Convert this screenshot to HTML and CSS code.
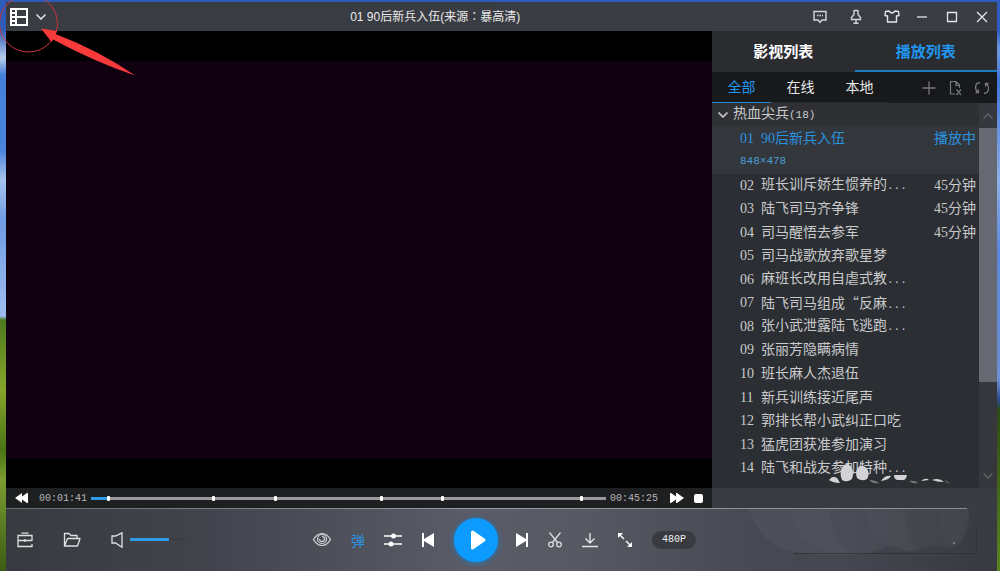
FILE: index.html
```
<!DOCTYPE html>
<html lang="zh-CN">
<head>
<meta charset="utf-8">
<title>01 90后新兵入伍</title>
<link rel="stylesheet" href="styles.css">
</head>
<body>
<main class="window">
  <header class="titlebar">
    <button class="menu" aria-label="主菜单">
      <svg width="18" height="18" viewBox="0 0 18 18" fill="none" stroke="#fff" stroke-width="2"><path d="M1 1H17V17H1ZM6 1V17M6 9H17M1 5H6M1 9H6M1 13H6"/></svg>
      <svg width="10" height="6" viewBox="0 0 10 6" fill="none" stroke="#e4e5e7" stroke-width="1.5"><path d="M.5.5 5 5 9.5.5"/></svg>
    </button>
    <h1 class="title">01 90后新兵入伍(来源<span class="colon" lang="zh-TW">：</span>暴高清)</h1>
    <div class="title-actions">
      <div class="tools">
        <button aria-label="反馈"><svg width="18" height="16" viewBox="0 0 18 16" fill="none" stroke="#d4d5d7" stroke-width="1.4"><path d="M3 2.500H15V11H11L9 13.500 7 11H3Z"/><path d="M6 6.500H12" stroke-dasharray="1.500 1"/></svg></button>
        <button aria-label="置顶"><svg width="18" height="16" viewBox="0 0 18 16" fill="none" stroke="#d4d5d7" stroke-width="1.4"><path d="M6.500 1.500H11.500M7 1.500V5.500L4.500 8.500V10.500H13.500V8.500L11 5.500V1.500M9 10.500V14M6.500 14.200H11.500"/></svg></button>
        <button aria-label="皮肤"><svg width="18" height="16" viewBox="0 0 18 16" fill="none" stroke="#e4e5e7" stroke-width="1.4" stroke-linejoin="round"><path d="M6 2Q9 6 12 2L15.500 2.500 16 6.500 13.500 7V13H4.500V7L2 6.500 2.500 2.500Z"/></svg></button>
      </div>
      <div class="frame">
        <button aria-label="最小化"><svg width="12" height="12" viewBox="0 0 12 12" stroke="#e4e5e7" stroke-width="1.300"><path d="M1 6H11"/></svg></button>
        <button aria-label="最大化"><svg width="12" height="12" viewBox="0 0 12 12" fill="none" stroke="#e4e5e7" stroke-width="1.300"><path d="M1.500 1.500H10.500V10.500H1.500Z"/></svg></button>
        <button aria-label="关闭"><svg width="12" height="12" viewBox="0 0 12 12" stroke="#e4e5e7" stroke-width="1.300"><path d="M1 1 11 11M11 1 1 11"/></svg></button>
      </div>
    </div>
  </header>

  <div class="content">
    <section class="player">
      <div class="video"><div class="picture"></div></div>
      <div class="progress">
        <button aria-label="快退"><svg width="14" height="10" viewBox="0 0 14 10" fill="#fff"><path d="M7 0V3.500L12 0H13V10H12L7 6.500V10L0 5Z"/></svg></button>
        <time class="elapsed">00:01:41</time>
        <div class="seek">
          <input class="range" type="range" min="0" max="2725" value="101" aria-label="播放进度" style="--fill:3.3%">
          <i class="mark" style="left:3.3%"></i>
          <i class="mark" style="left:23.6%"></i>
          <i class="mark" style="left:35.8%"></i>
          <i class="mark" style="left:56.3%"></i>
          <i class="mark" style="left:68.1%"></i>
          <i class="mark" style="left:95.2%"></i>
        </div>
        <time>00:45:25</time>
        <button class="forward" aria-label="快进"><svg width="14" height="10" viewBox="0 0 14 10" fill="#fff"><path d="M0 0H1L6 3.500V0H7L14 5 7 10H6V6.500L1 10H0Z"/></svg></button>
        <button aria-label="停止"><svg width="9" height="9" viewBox="0 0 9 9"><rect width="9" height="9" rx="2" fill="#fff"/></svg></button>
      </div>
    </section>

    <aside class="sidebar">
      <nav class="tabs">
        <button>影视列表</button>
        <button class="current">播放列表</button>
      </nav>
      <div class="filters">
        <button class="current">全部</button>
        <button>在线</button>
        <button>本地</button>
        <div class="list-tools">
          <button aria-label="添加"><svg width="14" height="14" viewBox="0 0 14 14" stroke="#77797c" stroke-width="1.300"><path d="M7 .5V13.500M.5 7H13.500"/></svg></button>
          <button aria-label="清空"><svg width="14" height="16" viewBox="0 0 14 16" fill="none" stroke="#77797c" stroke-width="1.200"><path d="M7 14H2.500V1.500H8L11.500 5V8M8 1.500V5.500H11.500M8.500 9.500 13 15M13 9.500 8.500 15"/></svg></button>
          <button aria-label="循环"><svg width="16" height="14" viewBox="0 0 16 14" fill="none" stroke="#77797c" stroke-width="1.300"><path d="M6 1.500C1 2 0 8 4 11.500M1.500 11.500H4.500V8.500M10 12.500C15 12 16 6 12 2.500M14.500 2.500H11.500V5.500"/></svg></button>
        </div>
      </div>
      <div class="list-area">
        <div class="playlist">
          <button class="group">
            <svg width="10" height="6" viewBox="0 0 10 6" fill="none" stroke="#b9babd" stroke-width="1.800"><path d="M.5.5 5 5 9.500.5"/></svg>
            <span>热血尖兵<span class="mono">(18)</span></span>
          </button>
          <div class="playing">
            <div class="line"><span class="no">01</span><span class="name">90后新兵入伍</span><span>播放中</span></div>
            <div class="size">848×478</div>
          </div>
          <ol class="episodes">
            <li><span class="no">02</span><span class="name">班长训斥娇生惯养的<span class="mono">...</span></span><span>45分钟</span></li>
            <li><span class="no">03</span><span class="name">陆飞司马齐争锋</span><span>45分钟</span></li>
            <li><span class="no">04</span><span class="name">司马醒悟去参军</span><span>45分钟</span></li>
            <li><span class="no">05</span><span class="name">司马战歌放弃歌星梦</span></li>
            <li><span class="no">06</span><span class="name">麻班长改用自虐式教<span class="mono">...</span></span></li>
            <li><span class="no">07</span><span class="name">陆飞司马组成<span class="quote">“</span>反麻<span class="mono">...</span></span></li>
            <li><span class="no">08</span><span class="name">张小武泄露陆飞逃跑<span class="mono">...</span></span></li>
            <li><span class="no">09</span><span class="name">张丽芳隐瞒病情</span></li>
            <li><span class="no">10</span><span class="name">班长麻人杰退伍</span></li>
            <li><span class="no">11</span><span class="name">新兵训练接近尾声</span></li>
            <li><span class="no">12</span><span class="name">郭排长帮小武纠正口吃</span></li>
            <li><span class="no">13</span><span class="name">猛虎团获准参加演习</span></li>
            <li><span class="no">14</span><span class="name">陆飞和战友参加特种<span class="mono">...</span></span></li>
          </ol>
          <svg class="petals" width="126" height="22" viewBox="0 0 126 22" fill="#d3d3d5">
            <path d="M2 17Q8 9 13 20Q6 20 2 17Z"/>
            <path d="M15 17C11 8 16 1 20 1S28 8 25 16Q20 20 15 17Z"/>
            <path d="M30 15C27 7 32 2 36 3S44 10 40 16Q35 19 30 15Z"/>
            <path d="M54 18Q58 12 64 13Q62 17 54 18ZM67 12H80Q79 18 75 17H70Q67 16 67 12Z"/>
            <path d="M94 18Q99 14 102 17ZM105 17Q112 14 117 19Q110 19 105 17Z"/>
            <path fill="#777a7e" d="M42 17Q48 17 52 20Q46 21 42 17ZM82 18Q88 17 91 20Q86 21 82 18ZM118 17L124 21 119 19Z"/>
          </svg>
        </div>
        <div class="scrollbar">
          <svg class="arrow" width="10" height="6" viewBox="0 0 10 6" fill="none" stroke="#5e6065" stroke-width="1.500"><path d="M.5 5.500 5 1 9.500 5.500"/></svg>
          <div class="thumb"></div>
          <svg class="arrow last" width="10" height="6" viewBox="0 0 10 6" fill="none" stroke="#5e6065" stroke-width="1.500"><path d="M.5.5 5 5 9.500.5"/></svg>
        </div>
      </div>
    </aside>
  </div>

  <footer class="controls">
    <svg class="skin" width="236" height="50" viewBox="0 0 236 50">
      <path fill="none" stroke="#2f3238" d="M53 44.500H235.500V16"/>
      <path fill="#fff" fill-opacity=".035" d="M8 0H228C230 20 222 38 210 39Q190 34 170 43L150 36Q120 52 60 44Q20 40 8 0Z"/>
      <path fill="#fff" fill-opacity=".02" d="M48 0H228C228 18 220 36 208 36Q196 22 201 0H165Q162 25 176 40Q135 48 124 0H88Q90 30 110 44Q60 48 48 0Z"/>
      <circle cx="213" cy="34" r="1" fill="#8f9197"/>
    </svg>
    <div class="left">
      <button aria-label="工具箱"><svg width="16" height="16" viewBox="0 0 16 16" fill="none" stroke="#e0e1e3" stroke-width="1.300"><path d="M15 9V3.500H1V14.500H15V12M4.500 1.200H11.500M1 8.500H15M8 7V10"/></svg></button>
      <button aria-label="打开文件"><svg width="18" height="16" viewBox="0 0 18 16" fill="none" stroke="#e0e1e3" stroke-width="1.300" stroke-linejoin="round"><path d="M1.500 14V1.500H6L8 3.500H14V6M1.500 14 4.500 6.500H17L14.500 14Z"/></svg></button>
      <div class="volume">
        <button aria-label="静音"><svg width="12" height="16" viewBox="0 0 12 16" fill="none" stroke="#e0e1e3" stroke-width="1.300"><path d="M1 4H4.500L11 .8V15.200L4.500 11H1Z"/></svg></button>
        <input class="range" type="range" min="0" max="100" value="70" aria-label="音量" style="--fill:70%">
      </div>
    </div>
    <div class="center">
      <button aria-label="护眼"><svg width="20" height="16" viewBox="0 0 20 16" fill="none" stroke="#d6d7da" stroke-width="1.200"><path d="M1.500 7.500Q5 1.500 10 1.500T18.500 7.500Q15 13.500 10 13.500T1.500 7.500Z"/><circle cx="10" cy="7" r="4.500"/><path d="M10 4.500A2.500 2.500 0 1 1 7.500 7"/></svg></button>
      <button class="danmu">弹</button>
      <button aria-label="设置"><svg width="18" height="16" viewBox="0 0 18 16" fill="#fff"><path d="M0 4H18M0 12H18" stroke="#fff" stroke-width="1.300"/><circle cx="9.500" cy="4" r="2.500"/><circle cx="7" cy="12" r="2.500"/></svg></button>
      <button aria-label="上一个"><svg width="16" height="16" viewBox="0 0 16 16" fill="#fff"><path d="M2 1H4V7L14 1V15L4 9V15H2Z"/></svg></button>
      <button class="play" aria-label="播放"><svg width="16" height="20" viewBox="0 0 16 20"><path d="M2.500 2V18L14 10Z" fill="#fff" stroke="#fff" stroke-width="3" stroke-linejoin="round"/></svg></button>
      <button aria-label="下一个"><svg width="14" height="16" viewBox="0 0 14 16" fill="#fff"><path d="M0 1 10 7V1H12V15H10V9L0 15Z"/></svg></button>
      <button aria-label="截取"><svg width="16" height="16" viewBox="0 0 16 16" fill="none" stroke="#dcdde0" stroke-width="1.300"><path d="M1.500.5 9.500 10.500M12.500.5 4.500 10.500"/><circle cx="3" cy="12.500" r="2.300"/><circle cx="11" cy="12.500" r="2.300"/></svg></button>
      <button aria-label="下载"><svg width="18" height="16" viewBox="0 0 18 16" fill="none" stroke="#e4e5e7" stroke-width="1.400"><path d="M8 1V10.500M3.500 6.500 8 11 12.500 6.500M0 14.500H16"/></svg></button>
      <button aria-label="全屏"><svg width="16" height="16" viewBox="0 0 16 16" fill="#fff"><path d="M0 1H5L0 6ZM14 15H9L14 10Z"/><path d="M2 3 6 7M8 9 12 13" stroke="#fff" stroke-width="1.400"/></svg></button>
      <button class="quality">480P</button>
    </div>
  </footer>
</main>
<svg class="callout" width="140" height="80" viewBox="0 0 140 80">
  <ellipse cx="28.500" cy="23.500" rx="29" ry="28.500" fill="none" stroke="#c9343c" stroke-width="1"/>
  <path d="M41 28.500 57 31 55.500 34 Q100 51 135 75.500 Q95 62 53 39.500L51.500 42Z" fill="#f93a3a"/>
</svg>
</body>
</html>
```
FILE: styles.css
```
* { box-sizing: border-box; }

body {
  margin: 0;
  height: 100vh;
  padding: 2px 3px 0 6px;
  overflow: hidden;
  font-family: "Liberation Sans", "Noto Sans CJK SC", sans-serif;
  font-size: 14px;
  color: #c9cacc;
  background:
    linear-gradient(#2f5cc0 0 30px, #6f9ae0 50px, #3f74d8 80px, #8fb0e6 180px, #5a88dc 250px, #6c8fd0 380px, #2a4a90 400px, #2d4a14 410px, #5c8420) right / 50% 100% no-repeat,
    linear-gradient(#2d5cb8 0 30px, #b8cdec 58px, #4580dc 75px, #4a84dc 150px, #a8c4ee 180px, #6f9ce4 220px, #9fbdf0 316px, #4c7a1c 320px, #86a42a 390px, #4a7416 450px, #7a9c30 480px, #3c5c14) left / 50% 100% no-repeat;
}

button {
  display: flex;
  align-items: center;
  justify-content: center;
  padding: 0;
  border: 0;
  background: none;
  color: inherit;
  font: inherit;
}

svg { display: block; flex: none; }

.window {
  display: flex;
  flex-direction: column;
  height: 100%;
  background: #383b41;
}

/* Title bar */
.titlebar {
  display: grid;
  grid-template-columns: 8fr auto 11fr;
  align-items: center;
  height: 29px;
  padding: 0 9px 0 4px;
  background: #393c42;
}
.menu { gap: 8px; justify-self: start; }
.title {
  margin: 0;
  font-size: 12px;
  font-weight: 400;
  line-height: 18px;
  color: #e8e9ea;
}
.colon { font-family: "Noto Sans CJK TC", sans-serif; }
.title-actions { display: flex; justify-content: flex-end; gap: 15px; }
.tools, .frame { display: flex; align-items: center; gap: 18px; }

/* Video and sidebar */
.content {
  display: flex;
  flex: 1;
  min-height: 0;
}
.player {
  display: flex;
  flex: 1;
  flex-direction: column;
  min-width: 0;
}
.video {
  display: flex;
  flex: 1;
  padding: 30px 0;
  background: #000;
}
.picture { flex: 1; background: #110010; }

.progress {
  display: flex;
  align-items: center;
  height: 20px;
  padding: 0 9px;
  background: #1e1f20;
  font-family: "Liberation Mono", monospace;
  font-size: 10px;
  color: #b4b5b7;
}
.elapsed { margin-left: 10px; }
.seek {
  position: relative;
  display: flex;
  flex: 1;
  margin: 0 4px;
}
.forward { margin: 0 10px 0 12px; }

.range {
  --rest: #99999c;
  flex: 1;
  width: 100%;
  min-width: 0;
  height: 3px;
  margin: 0;
  appearance: none;
  background: linear-gradient(90deg, #2e9be8 var(--fill), var(--rest) var(--fill));
}
.range::-webkit-slider-thumb { appearance: none; width: 1px; height: 3px; }
.mark {
  position: absolute;
  top: -1px;
  width: 3px;
  height: 5px;
  margin-left: -1px;
  border-radius: 1px;
  background: #fff;
}

.sidebar {
  display: flex;
  flex: 0 0 285px;
  flex-direction: column;
  padding-bottom: 20px;
  background: #393b42;
}
.tabs {
  display: grid;
  grid-template-columns: 1fr 1fr;
  height: 41px;
  background: #2a2c30;
  font-size: 15px;
  font-weight: 700;
  color: #fff;
}
.tabs button { border-bottom: 2px solid transparent; }
.tabs .current { border-color: #1b7cc2; color: #2196ee; }

.filters {
  display: flex;
  height: 31px;
  background: #18191a;
  color: #e6e7e8;
}
.filters > button {
  width: 59px;
  padding-bottom: 3px;
  border-bottom: 1px solid #292a2c;
}
.filters > .current { border-color: #2389d2; color: #2196ee; }
.list-tools {
  display: flex;
  flex: 1;
  align-items: center;
  justify-content: flex-end;
  gap: 12px;
  padding-right: 7px;
}

.list-area { display: flex; flex: 1; min-height: 0; }
.playlist {
  position: relative;
  display: flex;
  flex: 1;
  flex-direction: column;
  background: #2b2e32;
  font-family: "Liberation Serif", "Noto Sans CJK SC", serif;
  line-height: 20px;
}
.group {
  justify-content: flex-start;
  gap: 5px;
  height: 23px;
  padding-left: 6px;
  background: #2e3034;
}
.mono { font-family: "Liberation Mono", monospace; font-size: 11px; }
.quote { font-family: "Noto Sans CJK SC", sans-serif; }
.playing {
  height: 48px;
  padding: 0 3px 0 28px;
  background: #33363a;
  color: #2a93e0;
}
.line, .episodes li { display: flex; align-items: center; }
.line { height: 25px; }
.no { width: 21px; }
.name { flex: 1; white-space: nowrap; }
.size {
  font-family: "Liberation Mono", monospace;
  font-size: 11px;
  color: #4a9fd8;
}
.episodes {
  display: flex;
  flex: 1;
  flex-direction: column;
  margin: 0;
  padding: 0 3px 8px 28px;
  list-style: none;
}
.episodes li { flex: 1; min-height: 0; }
.petals { position: absolute; right: 26px; bottom: 3px; }

.scrollbar {
  display: flex;
  flex: 0 0 18px;
  flex-direction: column;
  align-items: center;
  background: #35373c;
}
.arrow { margin: 10px 0 9px; }
.thumb { width: 100%; height: 66%; background: #666872; }
.last { margin-top: auto; }

/* Playback controls */
.controls {
  position: relative;
  display: grid;
  grid-template-columns: 1fr auto 1fr;
  align-items: center;
  height: 63px;
  padding: 0 6px 0 11px;
  background:
    linear-gradient(90deg, #66686e, #9a9ba2 50%, #8a8c92) left top / 97% 1px no-repeat,
    linear-gradient(90deg, #383a40, #41444c 20%, #5a5c67 47%, #565862 58%, #474a53 75%, #444750 85%, #383b41 98%);
}
.skin { position: absolute; top: 1px; right: 20px; }
.left { display: flex; align-items: center; gap: 30px; }
.volume { display: flex; align-items: center; gap: 7px; }
.volume .range { --rest: #3a3d43; flex: none; width: 55px; }
.center { position: relative; display: flex; align-items: center; gap: 18px; }
.danmu { width: 16px; color: #2b93e2; }
.play {
  width: 44px;
  height: 44px;
  padding-left: 3px;
  border-radius: 50%;
  background: #0d9bff;
  box-shadow: 0 1px 5px #1682d0;
}
.quality {
  width: 44px;
  height: 18px;
  border-radius: 9px;
  background: #393b41;
  font-family: "Liberation Mono", monospace;
  font-size: 10px;
  color: #f0f0f1;
}

.callout { position: absolute; top: 0; left: 0; pointer-events: none; }
```
